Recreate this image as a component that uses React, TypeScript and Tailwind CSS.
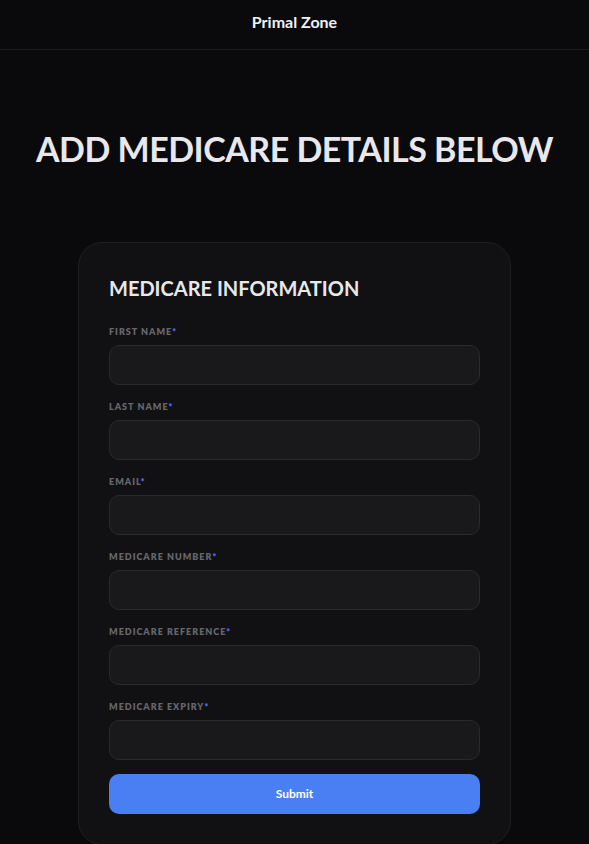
import React from 'react'

const fields = [
  'First Name',
  'Last Name',
  'Email',
  'Medicare Number',
  'Medicare Reference',
  'Medicare Expiry',
]

export default function App() {
  return (
    <div className="min-h-screen bg-[#0a0a0c] text-white" style={{ fontFamily: 'Lato, "Noto Sans", sans-serif' }}>
      <header className="h-[50px] border-b border-[#1c1c1f] flex items-center justify-center pb-[6px]">
        <span className="text-[16px] font-bold text-[#eef2f8]">Primal Zone</span>
      </header>

      <main className="flex flex-col items-center">
        <h1 className="mt-[82px] text-[34px] font-bold tracking-[-0.5px] text-[#e8e8ec] leading-none">
          ADD MEDICARE DETAILS BELOW
        </h1>

        <div className="mt-[76px] w-[433px] rounded-[24px] border border-[#1f1f23] bg-[#111113] px-[30px] pt-[35px] pb-[30px]">
          <h2 className="text-[20px] font-bold text-[#e8e8ec] leading-none">MEDICARE INFORMATION</h2>

          <form className="mt-[29px] flex flex-col gap-[17px]" onSubmit={(e) => e.preventDefault()}>
            {fields.map((f) => (
              <div key={f} className="flex flex-col gap-[9px]">
                <label className="text-[9px] font-extrabold tracking-[1px] uppercase text-[#66666b] leading-none">
                  {f}
                  <span className="text-[#4d6dff]">*</span>
                </label>
                <input
                  type="text"
                  className="h-[40px] w-full rounded-[10px] border border-[#2a2a2e] bg-[#19191b] px-3 text-sm text-white focus:outline-none"
                />
              </div>
            ))}
            <button
              type="submit"
              className="-mt-[3px] h-[40px] w-full rounded-[10px] bg-[#4a7ff3] text-[12px] font-bold text-white"
            >
              Submit
            </button>
          </form>
        </div>
      </main>
    </div>
  )
}
